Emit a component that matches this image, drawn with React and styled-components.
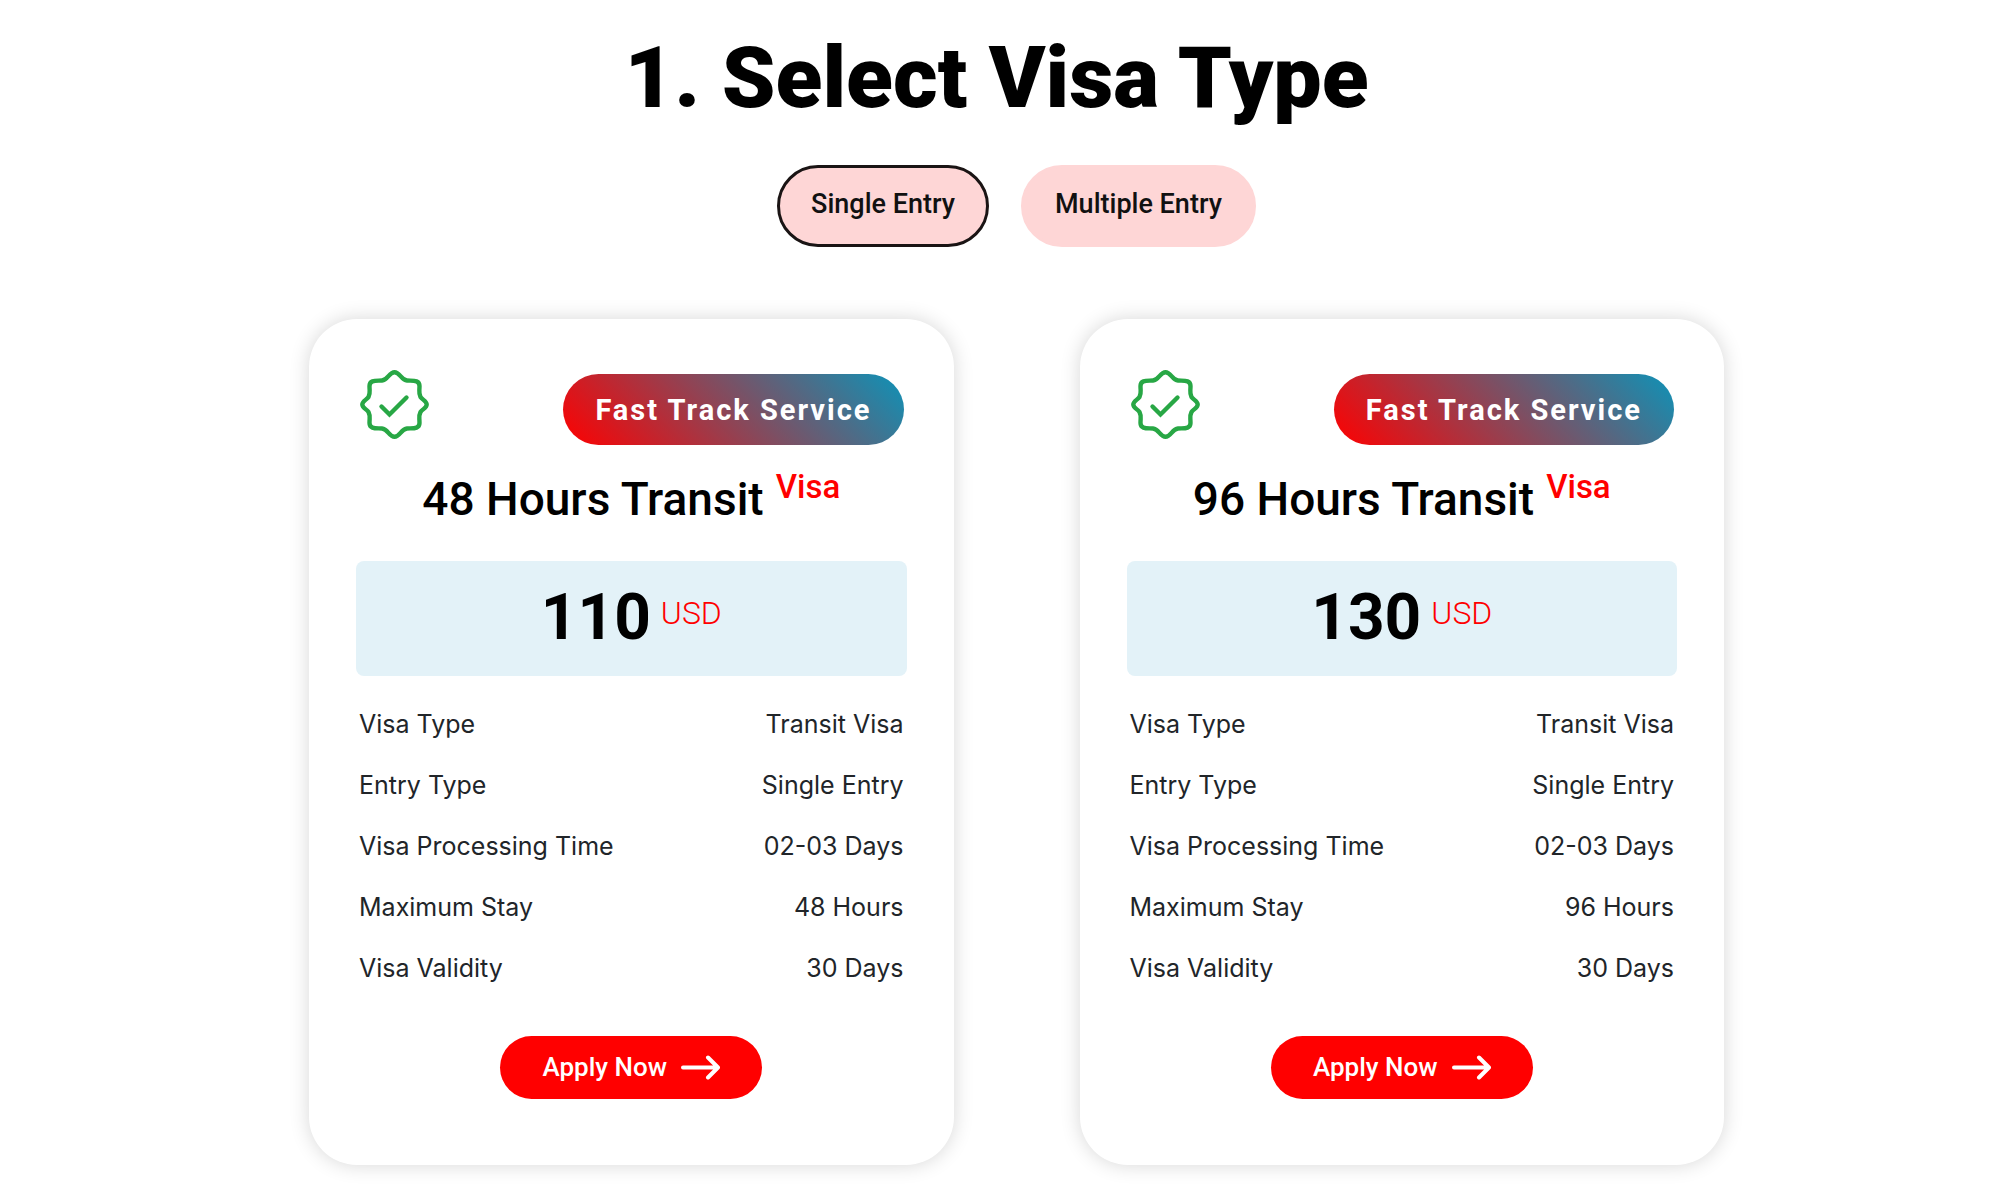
import React, { useState } from 'react';
import styled, { createGlobalStyle } from 'styled-components';

const visas = [
    { id: 1, hours: '48 Hours', price: 110 },
    { id: 2, hours: '96 Hours', price: 130 },
];

const GlobalStyle = createGlobalStyle`
    * {
        box-sizing: border-box;
    }
    body {
        margin: 0;
        background-color: #fff;
        font-family: Inter, sans-serif;
    }
    button {
        border: none;
        cursor: pointer;
    }
`

const Page = styled.main`
    padding: 28px 0 32px;
`

const Title = styled.h1`
    margin: 0;
    text-align: center;
    font-family: Roboto, sans-serif;
    font-size: 86px;
    font-weight: 900;
    line-height: 100px;
    color: #000;
`

const Content = styled.div`
    padding-left: 40px;
`

const Tabs = styled.div`
    display: flex;
    justify-content: center;
    gap: 32px;
    margin-top: 37px;
`

const Tab = styled.button`
    padding: 21px 31px 25px;
    background-color: #fed6d6;
    border: 3px solid ${(props) => (props.$active ? '#1a1414' : '#fed6d6')};
    border-radius: 41px;
    font-family: Roboto, sans-serif;
    font-size: 27px;
    font-weight: 500;
    line-height: 30px;
    color: #111;
`

const Cards = styled.div`
    display: grid;
    grid-template-columns: repeat(2, 33%);
    justify-content: center;
    column-gap: 126px;
    margin-top: 72px;
`

const Card = styled.section`
    padding: 51px 47px 66px;
    background-color: #fff;
    border-radius: 48px;
    box-shadow: 0 0 20px rgba(0, 0, 0, 0.16);
`

const CardTop = styled.div`
    display: flex;
    justify-content: space-between;
    align-items: flex-start;
    padding: 0 3px 0 4px;
`

const Service = styled.span`
    margin-top: 4px;
    padding: 20px 32px 19px;
    border-radius: 36px;
    background: linear-gradient(45deg, #ff0000, #0d93b8);
    font-family: Roboto, sans-serif;
    font-size: 29px;
    font-weight: 700;
    line-height: 32px;
    letter-spacing: 2px;
    color: #fff;
`

const Name = styled.h2`
    display: flex;
    justify-content: center;
    align-items: flex-start;
    gap: 12px;
    margin: 24px 0 0;
    font-family: Roboto, sans-serif;
    font-size: 46px;
    font-weight: 500;
    line-height: 60px;
    color: #000;
`

const Red = styled.span`
    font-size: 33px;
    font-weight: 500;
    line-height: 36px;
    color: #f00;
`

const Currency = styled(Red)`
    font-size: 32px;
    font-weight: 300;
    line-height: 64px;
`

const Price = styled.div`
    display: flex;
    justify-content: center;
    align-items: flex-start;
    gap: 10px;
    margin-top: 32px;
    padding: 20px 0 21px;
    border-radius: 8px;
    background-color: #e3f2f8;
    font-family: Roboto, sans-serif;
`

const Amount = styled.strong`
    font-size: 64px;
    font-weight: 700;
    line-height: 74px;
    color: #000;
`

const Details = styled.table`
    width: 100%;
    margin-top: 18px;
    border-collapse: collapse;
    font-size: 25px;
    line-height: 31px;
    color: #212529;

    th, td {
        padding: 15px 3px;
        font-weight: 400;
        text-align: left;
    }
    td {
        text-align: right;
    }
`

const Apply = styled.button`
    display: flex;
    align-items: center;
    gap: 14px;
    margin: 37px auto 0;
    padding: 16px 42px 17px;
    border-radius: 32px;
    background-color: #f00;
    font-family: Roboto, sans-serif;
    font-size: 26px;
    font-weight: 500;
    line-height: 30px;
    color: #fff;
`

const CheckIcon = () => (
    <svg width="69" height="69" viewBox="0 0 69 69" fill="none" stroke="#28a745" strokeWidth="4.4" strokeLinecap="round" strokeLinejoin="round" aria-hidden="true">
        <path d="M34.5 2.3C40 2.3 41 10 47 10.500C52 11 59.500 9.500 59.500 16C59.500 22 58.500 23 60.500 27C62.500 30 66.700 31 66.700 34.500C66.700 38 62.500 39 60.500 42C58.500 46 59.500 47 59.500 53C59.500 59.500 52 58 47 58.500C41 59 40 66.700 34.500 66.700C29 66.700 28 59 22 58.500C17 58 9.500 59.500 9.500 53C9.500 47 10.500 46 8.500 42C6.500 39 2.300 38 2.300 34.500C2.300 31 6.500 30 8.500 27C10.500 23 9.500 22 9.500 16C9.500 9.500 17 11 22 10.500C28 10 29 2.300 34.500 2.300Z" />
        <path d="M21.500 36.500L29.500 44.500L46.500 27.500" strokeLinejoin="miter" />
    </svg>
);

const ArrowIcon = () => (
    <svg width="39" height="25" viewBox="0 0 39 25" fill="none" stroke="#fff" strokeWidth="4" strokeLinecap="round" strokeLinejoin="round" aria-hidden="true">
        <path d="M2 12.500H36M27 2.500L37 12.500L27 22.500" />
    </svg>
);

const VisaCard = ({ visa, entry }) => (
    <Card>
        <CardTop>
            <CheckIcon />
            <Service>Fast Track Service</Service>
        </CardTop>
        <Name>
            {visa.hours} Transit <Red>Visa</Red>
        </Name>
        <Price>
            <Amount>{visa.price}</Amount>
            <Currency>USD</Currency>
        </Price>
        <Details>
            <tbody>
                <tr>
                    <th scope="row">Visa Type</th>
                    <td>Transit Visa</td>
                </tr>
                <tr>
                    <th scope="row">Entry Type</th>
                    <td>{entry}</td>
                </tr>
                <tr>
                    <th scope="row">Visa Processing Time</th>
                    <td>02-03 Days</td>
                </tr>
                <tr>
                    <th scope="row">Maximum Stay</th>
                    <td>{visa.hours}</td>
                </tr>
                <tr>
                    <th scope="row">Visa Validity</th>
                    <td>30 Days</td>
                </tr>
            </tbody>
        </Details>
        <Apply type="button">
            Apply Now
            <ArrowIcon />
        </Apply>
    </Card>
);

const App = () => {
    const [entry, setEntry] = useState('Single Entry');

    return (
        <Page>
            <GlobalStyle />
            <Title>1. Select Visa Type</Title>
            <Content>
                <Tabs>
                    {['Single Entry', 'Multiple Entry'].map((name) => (
                        <Tab key={name} type="button" $active={entry === name} onClick={() => setEntry(name)}>
                            {name}
                        </Tab>
                    ))}
                </Tabs>
                <Cards>
                    {visas.map((visa) => (
                        <VisaCard key={visa.id} visa={visa} entry={entry} />
                    ))}
                </Cards>
            </Content>
        </Page>
    );
};

export default App;
